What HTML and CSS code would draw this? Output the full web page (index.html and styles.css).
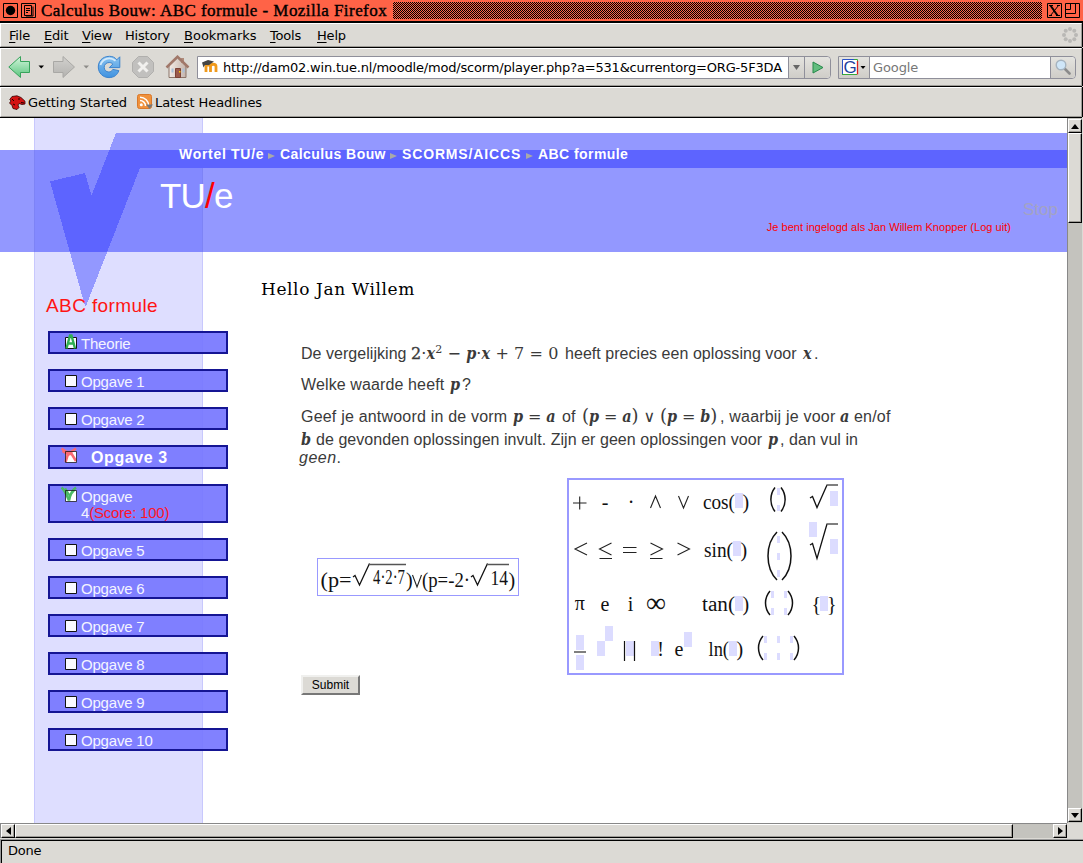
FILE: index.html
```html
<!DOCTYPE html>
<html lang="nl">
<head>
<meta charset="utf-8">
<title>Calculus Bouw: ABC formule - Mozilla Firefox</title>
<link rel="stylesheet" href="styles.css">
</head>
<body>
<div class="titlebar">
  <svg class="wm-left" width="34" height="15" viewBox="0 0 34 15" fill="none" stroke="#000"><path d="M.5.5h14v14H.5zM18.5.5h14v14h-14z"/><circle cx="7.5" cy="7.5" r="4.7" fill="#000" stroke="none"/><path d="M21.500 2.500h7v10h-7zM30 3.500v9.500h-7M23 5.500h4M23 7.500h4M23 9.500h2"/></svg>
  <span class="wm-title">Calculus Bouw: ABC formule - Mozilla Firefox</span>
  <span class="wm-dither"></span>
  <svg class="wm-right" width="33" height="15" viewBox="0 0 33 15" fill="none" stroke="#000"><path d="M.5.5h14v14H.5zM18.500.5h14v14h-14zM23.500 1v5.500M18.500 6.500h5M28.500 1v9.500M18.500 10.500h10"/><path d="M3.500 2.500l7 10" stroke-width="2"/><path d="M11.500 2.500l-8 10M2 2.500h4M10 2.500h3M2 12.500h3M9 12.500h4"/></svg>
</div>

<div class="bar menubar">
  <span><u>F</u>ile</span><span><u>E</u>dit</span><span><u>V</u>iew</span><span>Hi<u>s</u>tory</span><span class="wide"><u>B</u>ookmarks</span><span><u>T</u>ools</span><span><u>H</u>elp</span>
  <svg class="throbber" width="16" height="16" viewBox="0 0 16 16" fill="#b9b8b5"><circle cx="8" cy="2" r="2"/><circle cx="12.300" cy="3.700" r="2"/><circle cx="14" cy="8" r="2"/><circle cx="12.300" cy="12.300" r="2"/><circle cx="8" cy="14" r="2"/><circle cx="3.700" cy="12.300" r="2"/><circle cx="2" cy="8" r="2"/><circle cx="3.700" cy="3.700" r="2"/></svg>
</div>

<div class="bar navbar">
  <svg class="tools" width="182" height="24" viewBox="0 0 182 24">
    <defs>
      <linearGradient id="gr" x2="0" y2="1"><stop offset="0" stop-color="#d3f5dc"/><stop offset="1" stop-color="#5bc57e"/></linearGradient>
      <linearGradient id="gy" x2="0" y2="1"><stop offset="0" stop-color="#d2d1ce"/><stop offset="1" stop-color="#b3b2af"/></linearGradient>
      <linearGradient id="bl" x2="0" y2="1"><stop offset="0" stop-color="#8cc4f0"/><stop offset="1" stop-color="#3f92e0"/></linearGradient>
      <linearGradient id="ho" x2="1" y2="0"><stop offset="0" stop-color="#f3ebe6"/><stop offset="1" stop-color="#c5b5ac"/></linearGradient>
    </defs>
    <path d="M.8 12L12.500 1.500V6.500H21.500V17.500H12.500V22.500Z" fill="url(#gr)" stroke="#37a35b" stroke-linejoin="round"/>
    <path d="M30.500 10.500h5.500l-2.750 3z"/>
    <path d="M66.500 12L55 1.500V6.500H45.500V17.500H55V22.500Z" fill="url(#gy)" stroke="#a9a8a5" stroke-linejoin="round"/>
    <path d="M75.500 10.500h5.500l-2.750 3z" fill="#8d8c89"/>
    <path d="M101.500 1.300C94 1.500 90.300 6.500 90.300 12c0 6 4.700 10.600 10.700 10.600 5 0 8.500-2.700 9.800-7l-6-1.200c-.9 1.800-2.200 2.600-4 2.600-2.700 0-4.600-2-4.600-4.700s2-4.800 5-4.800c1.500 0 2.700.6 3.600 1.600l-3.500 3.500h10.500V1.800l-3 3C107 2.500 104.700 1.300 101.500 1.300z" fill="url(#bl)" stroke="#3c83cd"/>
    <path d="M92.500 10c.9-3.800 4.500-6.700 8.700-6.700 2.500 0 4.500.9 6.300 2.400" fill="none" stroke="#d4eafb" stroke-width="1.800"/>
    <path d="M130.500 1.500h9l6 6v9l-6 6h-9l-6-6v-9z" fill="#c1c0be" stroke="#b0afad"/>
    <path d="M130.500 7.500l9 9M139.500 7.500l-9 9" stroke="#f1f0ee" stroke-width="3"/>
    <path d="M161 11v11.500h17V11l-8.500-8z" fill="url(#ho)" stroke="#8b7468"/>
    <path d="M173 3h3v5h-3z" fill="#b08b7b"/><path d="M158.500 12.500L169.500 1.700l11 10.800" fill="none" stroke="#a1786a" stroke-width="2.500"/>
    <path d="M167.500 13.500h5v9h-5z" fill="#9b5a4b" stroke="#7d4236"/><path d="M163.500 13.500h2v4h-2zM174.500 13.500h2v4h-2z" fill="#a8c0d8"/><path d="M171 16h1.500v1.500H171z" fill="#fc0"/>
  </svg>
  <div class="urlbox">
    <svg width="18" height="16" viewBox="0 0 18 16"><path d="M4 13V7.500c0-2 4.500-2 4.500 0V13M8.500 7.500c0-3 5.500-3 5.500 0V13" fill="none" stroke="#f09a1c" stroke-width="2.800"/><path d="M0 3.500L6 1l6 1.500-5 3.500H3L1.500 8.500z" fill="#454545"/></svg>
    <span class="url">http://dam02.win.tue.nl/moodle/mod/scorm/player.php?a=531&amp;currentorg=ORG-5F3DA</span>
    <span class="drop"><svg width="7" height="5" viewBox="0 0 7 5"><path d="M0 0h7L3.500 5z" fill="#666"/></svg></span>
    <span class="go"><svg width="12" height="13" viewBox="0 0 12 13"><path d="M1 1l10 5.500L1 12z" fill="#62bd7e" stroke="#26894a"/></svg></span>
  </div>
  <div class="searchbox">
    <span class="engine"><svg width="24" height="18" viewBox="0 0 24 18"><path d="M.5 1.500h15v15H.5z" fill="#fff"/><path d="M.5 17V1.500H12" fill="none" stroke="#2a52c8"/><path d="M12 1.500h3.500v3" fill="none" stroke="#39a839"/><path d="M15.500 3v13.500" stroke="#d22" stroke-width="1.300"/><path d="M0 16.500h15" stroke="#39a839"/><text x="8" y="15" text-anchor="middle" class="gee">G</text><path d="M18.500 8h5l-2.500 3z"/></svg></span>
    <span class="query">Google</span>
    <span class="glass"><svg width="16" height="16" viewBox="0 0 16 16"><path d="M9.500 9.500l5 5" stroke="#8b8b8b" stroke-width="2.600" stroke-linecap="round"/><circle cx="6" cy="6" r="4.800" fill="#cfe6f8" stroke="#a6b4c0" stroke-width="1.400"/></svg></span>
  </div>
</div>

<div class="bar bookmarks">
  <svg class="dino" width="17" height="15" viewBox="0 0 17 15"><path d="M3 1.500L8 .8l4 1.700 4 3.700V9l-3 .5-3-1-1 1.500 1 2.500-2 2-4-1-1-3L.500 8 2 6 .8 4.500z" fill="#d41212" stroke="#300" stroke-width=".8"/><path d="M9 4h2M12 7.500l3 .5M3 4l2 2M4 9l2 1" stroke="#200"/></svg>
  <span>Getting Started</span>
  <svg class="feed" width="16" height="16" viewBox="0 0 16 16"><rect x=".5" y=".5" width="14" height="14" rx="2" fill="#f0913c" stroke="#d9782a"/><circle cx="4.300" cy="10.800" r="1.500" fill="#fff"/><path d="M3 6.500a5.500 5.500 0 015.500 5.500M3 3.200A8.800 8.800 0 0111.800 12" fill="none" stroke="#fff" stroke-width="1.500"/><path d="M9 10.500h7L12.500 15z" fill="#777"/></svg>
  <span>Latest Headlines</span>
</div>

<div class="view">
  <div class="page">
    <svg class="backdrop" width="1067" height="705" viewBox="0 118 1067 705" shape-rendering="crispEdges">
      <defs><clipPath id="band"><path d="M0 150H1067V252H0z"/></clipPath></defs>
      <path d="M34 118h169v705H34z" fill="#c8c8fd"/><path d="M35 118h167v705H35z" fill="#dedeff"/>
      <path d="M0 150H1067V252H0z" fill="#9398ff"/><path d="M34 150h169v102H34z" fill="#8389ff"/><path d="M34.500 150v102M202.500 150v102" stroke="#7d83f6"/>
      <path d="M50 181.500L85 173L91.500 195.500L116 133H1067V168H140L86 306H85z" fill="#9398ff"/>
      <path d="M50 181.500L85 173L91.500 195.500L116 133H1067V168H140L86 306H85z" fill="#5d64ff" clip-path="url(#band)"/>
    </svg>
    <header>
      <nav class="crumbs"><a class="c1">Wortel TU/e</a><i></i><a class="c2">Calculus Bouw</a><i></i><a class="c3">SCORMS/AICCS</a><i></i><a class="c2">ABC formule</a></nav>
      <div class="brandrow"><h1>TU<em>/</em>e</h1><span class="stop">Stop</span></div>
      <p class="login">Je bent ingelogd als Jan Willem Knopper (Log uit)</p>
    </header>
    <div class="columns">
      <aside>
        <h2>ABC formule</h2>
        <ul>
          <li><svg class="mark" viewBox="0 0 18 18"><path class="box" d="M6.500 4.500h11v11h-11z"/><path d="M7.500 15.500L11 2.500h1.500L16 15.500M8.500 10.500h6.500" fill="none" stroke="#2fae52" stroke-width="2.400"/></svg><span>Theorie</span></li>
          <li><svg class="mark" viewBox="0 0 18 18"><path class="box" d="M6.500 4.500h11v11h-11z"/></svg><span>Opgave 1</span></li>
          <li><svg class="mark" viewBox="0 0 18 18"><path class="box" d="M6.500 4.500h11v11h-11z"/></svg><span>Opgave 2</span></li>
          <li class="current"><svg class="mark" viewBox="0 0 18 18"><path d="M6.500 4.500h11v11h-11z" fill="#fff"/><path d="M2.500 1.500l5 3.500h4l5.500 9M17 1.500l-5 3.500-3.500 3.500-2 6.500M3.500 4l5 3h5" fill="none" stroke="#fa6a72" stroke-width="2.600"/><path class="edge" d="M6.500 4.500h11v11h-11z"/></svg><span>Opgave 3</span></li>
          <li class="tall"><svg class="mark" viewBox="0 0 18 18"><path d="M6.500 4.500h11v11h-11z" fill="#fff"/><path d="M2.500 1.500c3 2 5 7 7.500 13M17 1.500c-3 2-6 8-7 13M6 2.500l4 7M15.500 3.500l-4 5" fill="none" stroke="#4cb966" stroke-width="2.600"/><path class="edge" d="M6.500 4.500h11v11h-11z"/></svg><span>Opgave<br><b class="n">4</b><b>(Score: 100)</b></span></li>
          <li><svg class="mark" viewBox="0 0 18 18"><path class="box" d="M6.500 4.500h11v11h-11z"/></svg><span>Opgave 5</span></li>
          <li><svg class="mark" viewBox="0 0 18 18"><path class="box" d="M6.500 4.500h11v11h-11z"/></svg><span>Opgave 6</span></li>
          <li><svg class="mark" viewBox="0 0 18 18"><path class="box" d="M6.500 4.500h11v11h-11z"/></svg><span>Opgave 7</span></li>
          <li><svg class="mark" viewBox="0 0 18 18"><path class="box" d="M6.500 4.500h11v11h-11z"/></svg><span>Opgave 8</span></li>
          <li><svg class="mark" viewBox="0 0 18 18"><path class="box" d="M6.500 4.500h11v11h-11z"/></svg><span>Opgave 9</span></li>
          <li><svg class="mark" viewBox="0 0 18 18"><path class="box" d="M6.500 4.500h11v11h-11z"/></svg><span>Opgave 10</span></li>
        </ul>
      </aside>
      <main>
        <h3>Hello Jan Willem</h3>
        <div class="question">
          <div class="line l1"><span>De vergelijking</span><span class="m"><b>2</b>·<i>x</i><sup>2</sup> <s>−</s> <i>p</i>·<i>x</i> <s>+</s> 7 <s>=</s> 0</span><span>heeft precies een oplossing voor</span><span class="m"><i>x</i></span><span>.</span></div>
          <div class="line l2"><span>Welke waarde heeft</span><span class="m"><i>p</i></span><span>?</span></div>
          <div class="line l3"><span>Geef je antwoord in de vorm</span><span class="m"><i>p</i> <s>=</s> <i>a</i></span><span>of</span><span class="m"><q>(</q><i>p</i> <s>=</s> <i>a</i><q>)</q> <s>∨</s> <q>(</q><i>p</i> <s>=</s> <i>b</i><q>)</q></span><span>, waarbij je voor</span><span class="m"><i>a</i></span><span>en/of</span></div>
          <div class="line l4"><span class="m"><i>b</i></span><span>de gevonden oplossingen invult. Zijn er geen oplossingen voor</span><span class="m"><i>p</i></span><span>, dan vul in</span></div>
          <div class="line l5"><span><em>geen</em>.</span></div>
        </div>
        <div class="workspace">
          <div class="answer"><svg width="200" height="36" viewBox="318 559 200 36">
            <text y="587" x="320.500" textLength="31" lengthAdjust="spacingAndGlyphs">(p=</text>
            <path class="root" d="M353 577l2-1.500 4.500 9.500 10-21.500"/><path class="rule" d="M369 564.500h37"/>
            <text y="584" x="373" textLength="32" lengthAdjust="spacingAndGlyphs">4·2·7</text><text y="587" x="406">)</text><path class="op" d="M412.500 575l4.500 12 4.500-12"/><text y="587" x="422" textLength="48" lengthAdjust="spacingAndGlyphs">(p=-2·</text>
            <path class="root" d="M471 577l2-1.500 4.500 9.500 10-21.500"/><path class="rule" d="M487 564.500h22"/>
            <text y="585" x="490.500" textLength="17.500" lengthAdjust="spacingAndGlyphs">14</text><text y="587" x="508.500">)</text>
          </svg></div>
          <svg class="keypad" width="277" height="197" viewBox="0 0 277 197">
            <path d="M1 1h275v195H1z" fill="#fff" stroke="#9999ff" stroke-width="2"/>
            <g class="slots"><path d="M168 15h8v15h-8zM210 10h3v7h-3zM210 27h3v6h-3zM263 13h8v15h-8zM242 44h8v15h-8zM263 61h8v15h-8zM166 63h8v15h-8zM210 58h3v7h-3zM210 75h3v7h-3zM210 92h3v7h-3zM168 118h8v15h-8zM204 113h3v7h-3zM217 113h3v7h-3zM204 130h3v7h-3zM217 130h3v7h-3zM253 118h8v15h-8zM9 157h8v15H9zM9 177h8v15H9zM30 163h8v15h-8zM38 148h8v15h-8zM59 163h8v15h-8zM84 163h8v15h-8zM117 154h8v15h-8zM162 163h8v15h-8zM197 158h3v7h-3zM210 158h3v7h-3zM223 158h3v7h-3zM197 175h3v7h-3zM210 175h3v7h-3zM223 175h3v7h-3z"/></g>
            <path class="op" d="M6 25h13.500M12.700 18.500v13M83.500 30l5-12 5 12M111.500 18l5 12 5-12M20 65l-12 6 12 6M44.500 65l-12 6 12 6M32.500 80.500h12.500M56 69.500h13.500M56 74.500h13.500M83.500 65l12 6-12 6M83 80.500h12.500M110.500 65l12 6-12 6"/>
            <g class="mid"><text x="38" y="31">-</text><text x="64" y="31">·</text>
            <text x="12.700" y="132" class="pi">π</text><text x="38" y="133">e</text><text x="63.500" y="133">i</text><text x="89" y="134" class="inf">∞</text>
            <text x="93.500" y="178">!</text><text x="112" y="178">e</text></g>
            <text x="136" y="30.500" textLength="32" lengthAdjust="spacingAndGlyphs">cos(</text><text x="175.500" y="30.500">)</text>
            <text x="137" y="78.500" textLength="29" lengthAdjust="spacingAndGlyphs">sin(</text><text x="173.500" y="78.500">)</text>
            <text x="135" y="133" textLength="33" lengthAdjust="spacingAndGlyphs">tan(</text><text x="175.500" y="133">)</text>
            <text x="141.500" y="178" textLength="20.500" lengthAdjust="spacingAndGlyphs">ln(</text><text x="169.500" y="178">)</text>
            <text x="244.500" y="133">{</text><text x="260" y="133">}</text>
            <path class="rule" d="M7 174h12"/><path class="bar1" d="M57.500 163v20M67.500 163v20"/>
            <path class="par" d="M208 9.500c-5.500 7-5.500 17 0 24M214 9.500c5.500 7 5.500 17 0 24M210 54c-12 12-12 36 0 48M215 54c12 12 12 36 0 48M203 113c-6 7-6 17 0 24M221 113c6 7 6 17 0 24M196 158c-6 7-6 17 0 24M227 158c6 7 6 17 0 24"/>
            <path class="root" d="M243 20l2.500-1.500 4.500 11L260 7"/><path class="rule" d="M259.500 7h11.500"/>
            <path class="root" d="M243 67l2.500-1.500 4.500 15L260 46"/><path class="rule" d="M259.500 46h11.500"/>
          </svg>
        </div>
        <button class="submit">Submit</button>
      </main>
    </div>
  </div>
  <div class="vscroll"><span class="sb"><svg width="8" height="5" viewBox="0 0 8 5"><path d="M4 0l4 5H0z"/></svg></span><span class="thumb"></span><span class="sb end"><svg width="8" height="5" viewBox="0 0 8 5"><path d="M0 0h8L4 5z"/></svg></span></div>
</div>
<div class="hrow"><div class="hscroll"><span class="sb"><svg width="5" height="8" viewBox="0 0 5 8"><path d="M5 0v8L0 4z"/></svg></span><span class="thumb"></span><span class="sb end"><svg width="5" height="8" viewBox="0 0 5 8"><path d="M0 0l5 4-5 4z"/></svg></span></div></div>
<div class="status">Done</div>
</body>
</html>
```

FILE: styles.css
```css
* { box-sizing: border-box; }
body { margin: 0; width: 1083px; height: 863px; overflow: hidden; background: #dcdad5; font: 13px "DejaVu Sans", sans-serif; color: #000; }
svg { display: block; flex: none; }
h1, h2, h3, p, ul { margin: 0; padding: 0; font-weight: normal; }

.titlebar { height: 23px; background: #ff6347; border-bottom: 2px solid #000; padding: 3px 3px 0; display: flex; }
.wm-title { font: 17px/16px "Liberation Serif", serif; letter-spacing: .44px; margin-left: 4px; width: 352px; white-space: nowrap; -webkit-text-stroke: .4px #000; }
.wm-dither { width: 649px; height: 17px; margin-top: -1px; background: conic-gradient(#000 25%, transparent 0 50%, #000 0 75%, transparent 0) 0 0 / 2px 2px; }
.wm-right { margin-left: 5px; }

.bar { display: flex; align-items: center; border: 1px solid #fff; border-right-color: #9d9b96; border-bottom-color: #9d9b96; box-shadow: 0 1px #000, 1px 0 #000; margin: 0 1px 1px 0; white-space: nowrap; letter-spacing: -.1px; }
.bar.menubar { display: grid; grid-template-columns: 35px 38px 43px 59px 86px 47px 40px 1fr; height: 24px; padding-left: 8px; letter-spacing: -.2px; }
.menubar u { text-underline-offset: 2px; }
.menubar .wide { letter-spacing: 0; }
.throbber { margin: 0 3px 0 auto; }
.navbar { height: 38px; padding-left: 7px; }
.urlbox, .searchbox { display: flex; align-items: center; height: 23px; border: 1px solid #8f8f9a; border-radius: 0 4px 4px 0; background: #fff; }
.urlbox { width: 634px; margin-left: 7px; padding-left: 4px; }
.url { flex: 1; margin: 0 0 0 3px; letter-spacing: -.18px; }
.drop, .go, .engine, .glass { height: 21px; background: linear-gradient(#e4e3df, #cfcdc8); display: flex; align-items: center; justify-content: center; }
.drop { width: 17px; border-left: 1px solid #8f8f9a; border-right: 1px solid #8f8f9a; }
.go { width: 25px; border-radius: 0 4px 4px 0; }
.searchbox { width: 238px; margin-left: 7px; }
.engine { width: 31px; border-right: 1px solid #8f8f9a; }
.gee { font: 17px "Liberation Sans", sans-serif; fill: #1d3f9e; }
.query { flex: 1; padding-left: 3px; color: #777; }
.glass { width: 25px; border-left: 1px solid #8f8f9a; border-radius: 0 4px 4px 0; }
.bookmarks { height: 30px; padding-left: 8px; }
.feed { margin: 0 2px 0 10px; }
.dino { margin-right: 2px; }

.view { display: flex; height: 705px; }
.page { position: relative; width: 1067px; background: #fff; overflow: hidden; font-family: "Liberation Sans", sans-serif; }
.backdrop { position: absolute; left: 0; top: 0; }
header, .columns { position: relative; }
header { height: 134px; padding-top: 27px; color: #fff; }
.crumbs { display: grid; grid-template-columns: 89px 12px 110px 12px 124px 12px auto; align-items: center; margin-left: 179px; font: bold 14px/18px "Liberation Sans", sans-serif; white-space: nowrap; }
.crumbs i { border-left: 7px solid #a9a9a9; border-top: 3.500px solid transparent; border-bottom: 3.500px solid transparent; width: 0; margin-top: 3px; }
.c1 { letter-spacing: .7px; }
.c2 { letter-spacing: .43px; }
.c3 { letter-spacing: .85px; }
.brandrow { display: flex; justify-content: space-between; height: 57px; padding: 13px 9px 0 160px; }
h1 { font-size: 35px; line-height: 40px; letter-spacing: -.8px; }
h1 em { color: #f00; font-style: normal; }
.stop { font-size: 17px; line-height: 20px; color: #a3a3c4; margin-top: 24px; }
.login { font-size: 11px; line-height: 14px; color: #f00; text-align: right; padding-right: 56px; letter-spacing: .03px; }

.columns { display: flex; }
aside { width: 228px; padding: 43px 0 0 46px; }
h2 { font-size: 19px; line-height: 22px; color: #ff1414; letter-spacing: .39px; }
ul { list-style: none; margin: 14px 0 0 2px; }
li { display: flex; height: 23px; margin-bottom: 15px; border: 2px solid #151594; background: rgba(118,118,255,.92); color: #f4f4ff; font-size: 15px; line-height: 16px; padding-left: 9px; letter-spacing: -.2px; }
li span { padding: 3px 0 0 4px; white-space: nowrap; }
.mark { width: 18px; height: 18px; }
.box { fill: #fafaff; stroke: #111; }
.edge { fill: none; stroke: #111; stroke-opacity: .75; }
li.current { height: 24px; font-weight: bold; font-size: 16px; color: #fff; letter-spacing: .6px; }
li.current span { padding-left: 14px; }
li.tall { height: 39px; }
li b { font-weight: normal; color: #ff1428; }
li b.n { color: inherit; }

main { padding: 27px 0 0 33px; }
h3 { font: 17px/20px "DejaVu Serif", serif; letter-spacing: .6px; }
.question { margin: 45px 0 0 40px; color: #3a3a3a; font-size: 16px; letter-spacing: .04px; }
.line { display: grid; height: 20px; line-height: 20px; white-space: pre; }
.l1 { grid-template-columns: 110px 154px 238px 11px auto; }
.l1 .m { letter-spacing: .1px; }
.m b { font-weight: normal; -webkit-text-stroke: .3px; }
.l2 { margin-top: 11px; grid-template-columns: 149px 12px auto; letter-spacing: .12px; }
.l3 { margin-top: 12px; grid-template-columns: 212px 49px 20px 138px 120px 14px auto; letter-spacing: .2px; }
.l4 { margin-top: 3px; grid-template-columns: 15px 452px 12px auto; letter-spacing: .05px; }
.l5 { margin-top: -2px; margin-left: -2px; letter-spacing: .5px; }
.m { font-family: "DejaVu Serif", serif; font-size: 16px; letter-spacing: 0; }
.m i { font-weight: bold; font-stretch: condensed; }
.m s { text-decoration: none; font-family: "DejaVu Sans", sans-serif; font-weight: normal; }
.m sup { font-size: 11px; line-height: 0; }
.m q { quotes: none; font-size: 18px; line-height: 0; }
.l3 .m { letter-spacing: -.1px; }
.workspace { display: flex; margin: 10px 0 0 56px; }
.answer { width: 202px; height: 38px; margin-top: 80px; border: 1px solid #9999ff; background: #fff; }
.keypad { margin-left: 48px; }
.workspace text { font: 20px "Liberation Serif", serif; fill: #111; }
.workspace .op { fill: none; stroke: #222; stroke-width: 1.100; }
.workspace .inf { font-size: 28px; }
.mid { text-anchor: middle; }
.slots { fill: #dcdcff; }
.root { fill: none; stroke: #111; stroke-width: 1.300; }
.rule { stroke: #555; stroke-width: 1.500; }
.bar1 { stroke: #111; stroke-width: 1.200; }
.par { fill: none; stroke: #111; stroke-width: 1.500; }
.submit { display: block; margin: 0 0 0 40px; width: 59px; height: 20px; padding: 0; border: 2px solid; border-color: #f0f0ee #777 #777 #f0f0ee; background: #dcdad5; font: 12px/16px "Liberation Sans", sans-serif; color: #000; }

.vscroll { width: 15px; border-left: 1px solid #888; background: #c4c3be; display: flex; flex-direction: column; padding-top: 1px; }
.sb, .thumb { background: #dcdad5; border: 1px solid #fff; border-right-color: #000; border-bottom-color: #000; box-shadow: inset -1px -1px #9d9b96; }
.sb { width: 14px; height: 14px; flex: none; display: flex; align-items: center; justify-content: center; }
.vscroll .thumb { height: 90px; }
.end { margin-top: auto; }
.vscroll .end { margin-bottom: 1px; }
.hrow { padding-right: 16px; height: 16px; }
.hscroll { height: 15px; border-top: 1px solid #888; border-left: 1px solid #888; background: #c4c3be; display: flex; }
.hscroll .thumb { width: 998px; height: 14px; }
.hscroll .end { margin: 0 0 0 auto; }
.status { height: 24px; border: 1px solid #999; border-bottom: 0; border-right: 0; box-shadow: inset 1px 1px #000; padding: 3px 0 0 7px; line-height: 16px; letter-spacing: -.2px; }
```
